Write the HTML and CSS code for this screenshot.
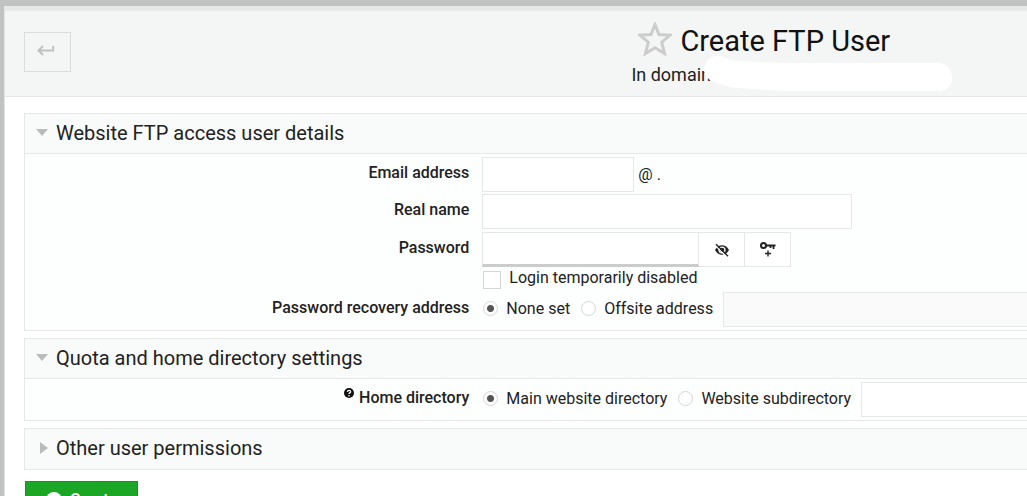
FILE: index.html
```html
<!DOCTYPE html>
<html lang="en">
<head>
    <meta charset="UTF-8" />
    <meta name="viewport" content="width=device-width, initial-scale=1.0" />
    <title>Create FTP User</title>
    <link rel="stylesheet" href="styles.css">
</head>
<body>
    <div class="panel">
        <header class="panel-heading">
            <div class="heading-left">
                <button type="button" class="back-btn" aria-label="Go back">
                    <svg width="18" height="12" viewBox="0 0 18 12"><path d="M6 1 1.500 5.500 6 10M2 5.500H16.200V1" /></svg>
                </button>
            </div>
            <div class="heading-title">
                <h1>
                    <svg class="star" width="34" height="34" viewBox="0 0 34 34"><path d="M17 2.500 21 12.500 32 13.200 23.700 20.200 26.500 31.500 17 25.800 7.500 31.500 10.300 20.200 2 13.200 13 12.500Z" /></svg>
                    <span>Create FTP User</span>
                </h1>
                <p class="subtitle">In domain
                    <svg class="cover" width="250" height="38" viewBox="0 0 250 38"><path d="M1 14C2 5 8 1 15 1C22 2 27 5 34 6L85 8H236C253 9 254 36 236 36H80L34 33C22 32 14 28 7 25C3 22 1 19 1 14Z" /></svg>
                </p>
            </div>
        </header>

        <form class="panel-body">
            <details class="section" open>
                <summary>Website FTP access user details</summary>
                <div class="fields">
                    <div class="row">
                        <label class="name" for="email">Email address</label>
                        <div class="value">
                            <input type="text" id="email" class="text-input short" />
                            <span class="suffix">@ .</span>
                        </div>
                    </div>
                    <div class="row">
                        <label class="name" for="realName">Real name</label>
                        <div class="value">
                            <input type="text" id="realName" class="text-input long" />
                        </div>
                    </div>
                    <div class="row">
                        <label class="name" for="password">Password</label>
                        <div class="value">
                            <div class="input-group">
                                <input type="password" id="password" class="text-input password" />
                                <button type="button" class="group-btn" aria-label="Show password">
                                    <svg width="16" height="14" viewBox="0 0 16 14"><path d="M1 7C3 3.500 5.300 2.200 8 2.200S13 3.500 15 7C13 10.500 10.700 11.800 8 11.800S3 10.500 1 7Z" fill="#222" /><circle cx="8" cy="7" r="3.600" fill="#fff" /><circle cx="8" cy="7" r="2.300" fill="#222" /><path d="M1.200 2.400 12.800 14" stroke="#fff" stroke-width="1.300" /><path d="M2 1.200 14 13.200" stroke="#222" stroke-width="1.400" /></svg>
                                </button>
                                <button type="button" class="group-btn" aria-label="Generate password">
                                    <svg width="18" height="18" viewBox="0 0 18 18" fill="none" stroke="#222"><circle cx="4.500" cy="4.500" r="2.500" stroke-width="2" /><path d="M7 4.500H16.500" stroke-width="2" /><path d="M11.500 5V7M14.500 5V8" stroke-width="1.800" /><path d="M9 9.500V15.500M6 12.500H12" stroke-width="1.400" /></svg>
                                </button>
                            </div>
                        </div>
                    </div>
                    <div class="row check-row">
                        <span></span>
                        <div class="value">
                            <input type="checkbox" id="disabled" />
                            <label for="disabled">Login temporarily disabled</label>
                        </div>
                    </div>
                    <div class="row">
                        <span class="name" id="recoveryLabel">Password recovery address</span>
                        <div class="value" role="radiogroup" aria-labelledby="recoveryLabel">
                            <label class="radio"><input type="radio" name="recovery" checked />None set</label>
                            <label class="radio"><input type="radio" name="recovery" />Offsite address</label>
                            <input type="text" class="text-input rest" aria-label="Offsite address" disabled />
                        </div>
                    </div>
                </div>
            </details>

            <details class="section" open>
                <summary>Quota and home directory settings</summary>
                <div class="fields">
                    <div class="row">
                        <span class="name" id="homeLabel">
                            <svg class="help" width="10" height="10" viewBox="0 0 10 10"><circle cx="5" cy="5" r="5" fill="#111" /><path d="M3.400 3.900C3.500 1.900 6.700 1.900 6.600 3.900C6.500 4.900 5 4.900 5 6.100" fill="none" stroke="#fff" stroke-width="1.300" /><circle cx="5" cy="7.700" r=".8" fill="#fff" /></svg>
                            Home directory
                        </span>
                        <div class="value" role="radiogroup" aria-labelledby="homeLabel">
                            <label class="radio"><input type="radio" name="home" checked />Main website directory</label>
                            <label class="radio"><input type="radio" name="home" />Website subdirectory</label>
                            <input type="text" class="text-input rest" aria-label="Website subdirectory" />
                        </div>
                    </div>
                </div>
            </details>

            <details class="section">
                <summary>Other user permissions</summary>
            </details>

            <button type="button" class="create-btn">
                <svg width="16" height="16" viewBox="0 0 16 16"><circle cx="8" cy="8" r="8" fill="#fff" /><path d="M8 4V12M4 8H12" stroke="#1ca626" stroke-width="2" /></svg>
                Create
            </button>
        </form>
    </div>
</body>
</html>
```

FILE: styles.css
```css
* {
    box-sizing: border-box;
}

html {
    overflow: hidden;
}

body {
    margin: 0;
    padding: 6px 0 0 4px;
    background: #c1c3c2;
    color: #222;
    font-family: Roboto, "Liberation Sans", sans-serif;
    font-size: 16px;
    line-height: 20px;
}

.panel {
    background: #fff;
    border-top: 5px solid #e8e8e8;
    border-left: 1px solid #e3e5e5;
    min-height: 100vh;
}

/* Heading */
.panel-heading {
    display: grid;
    grid-template-columns: 61% 1fr;
    padding: 11px 0 10px;
    background: #f4f5f5;
    border-bottom: 1px solid #e2e4e4;
}

.heading-left {
    padding: 10px 19px;
}

.back-btn {
    display: flex;
    align-items: center;
    justify-content: center;
    width: 47px;
    height: 40px;
    padding: 0 4px 2px 0;
    background: transparent;
    border: 1px solid #dadcdc;
}

.back-btn path {
    fill: none;
    stroke: #c0c0c0;
    stroke-width: 2;
}

.heading-title {
    padding-left: 3px;
}

h1 {
    display: flex;
    align-items: center;
    gap: 8px;
    margin: 0;
    padding-left: 7px;
    color: #111;
    font-size: 29px;
    font-weight: 400;
    line-height: 38px;
}

.star {
    margin-bottom: 4px;
}

.star path {
    fill: none;
    stroke: #ccc;
    stroke-width: 3;
}

.subtitle {
    position: relative;
    margin: 4px 0 0;
    font-size: 18px;
    line-height: 22px;
}

.cover {
    position: absolute;
    top: -9px;
    left: 72px;
    fill: #fff;
}

/* Sections */
.panel-body {
    padding: 16px 0 16px 19px;
}

.section {
    margin-bottom: 7px;
    border: 1px solid #e6e8e8;
    border-right: 0;
}

summary {
    display: flex;
    align-items: center;
    padding: 0 0 2px 11px;
    height: 40px;
    background: #f9fafa;
    font-size: 20px;
    line-height: 24px;
    cursor: pointer;
}

.section[open] summary {
    border-bottom: 1px solid #e6e8e8;
}

summary::before {
    content: "";
    width: 8px;
    height: 12px;
    margin: 0 8px 0 4px;
    background: #bbb;
    clip-path: polygon(0 0, 100% 50%, 0 100%);
}

.section[open] summary::before {
    width: 12px;
    height: 7px;
    margin: 0 8px 0 0;
    clip-path: polygon(0 0, 100% 0, 50% 100%);
}

.fields {
    display: flex;
    flex-direction: column;
    gap: 2px;
    padding: 3px 0;
    background: #fdfefe;
}

.row {
    display: grid;
    grid-template-columns: 4fr 5fr;
    align-items: center;
}

.name {
    padding: 0 1px 3px 0;
    text-align: right;
    font-weight: 500;
}

.value {
    display: flex;
    align-items: center;
    padding-left: 12px;
    min-width: 0;
}

.help {
    margin-right: 1px;
    vertical-align: 5px;
}

.text-input {
    height: 35px;
    padding: 0 8px;
    background: #fff;
    border: 1px solid #e6e8e8;
    font: inherit;
}

.short {
    width: 152px;
}

.long {
    width: 370px;
}

.rest {
    flex: 1;
    min-width: 0;
    border-right: 0;
}

.text-input:disabled {
    background: #fafafa;
}

.suffix {
    padding-left: 4px;
}

.input-group {
    display: flex;
    padding-top: 1px;
}

.password {
    width: 217px;
    border-bottom: 3px solid #ccc;
}

.group-btn {
    display: flex;
    align-items: center;
    justify-content: center;
    width: 46px;
    height: 35px;
    padding: 0;
    background: #fff;
    border: 1px solid #e6e8e8;
    border-left: 0;
}

/* Check boxes and radios */
input[type="checkbox"],
input[type="radio"] {
    appearance: none;
    flex: none;
    background: #fff;
    border: 1px solid #d4d6d8;
}

input[type="checkbox"] {
    width: 18px;
    height: 18px;
    margin: 1px 8px 0 1px;
}

.check-row {
    padding-bottom: 1px;
}

.check-row .value {
    height: 20px;
}

.check-row label {
    padding-bottom: 2px;
}

.radio {
    display: flex;
    align-items: center;
    margin-right: 10px;
    padding-bottom: 2px;
    white-space: nowrap;
}

input[type="radio"] {
    width: 15px;
    height: 15px;
    margin: 0 8px 0 1px;
    border-radius: 50%;
}

input[type="radio"]:checked {
    background: radial-gradient(circle, #555 3px, #fff 4px);
}

.create-btn {
    display: flex;
    align-items: center;
    gap: 8px;
    height: 38px;
    margin: 11px 0 0 1px;
    padding: 0 20px;
    background: #1ca626;
    border: 1px solid #17911f;
    color: #fff;
    font: inherit;
    font-weight: 500;
}
```
